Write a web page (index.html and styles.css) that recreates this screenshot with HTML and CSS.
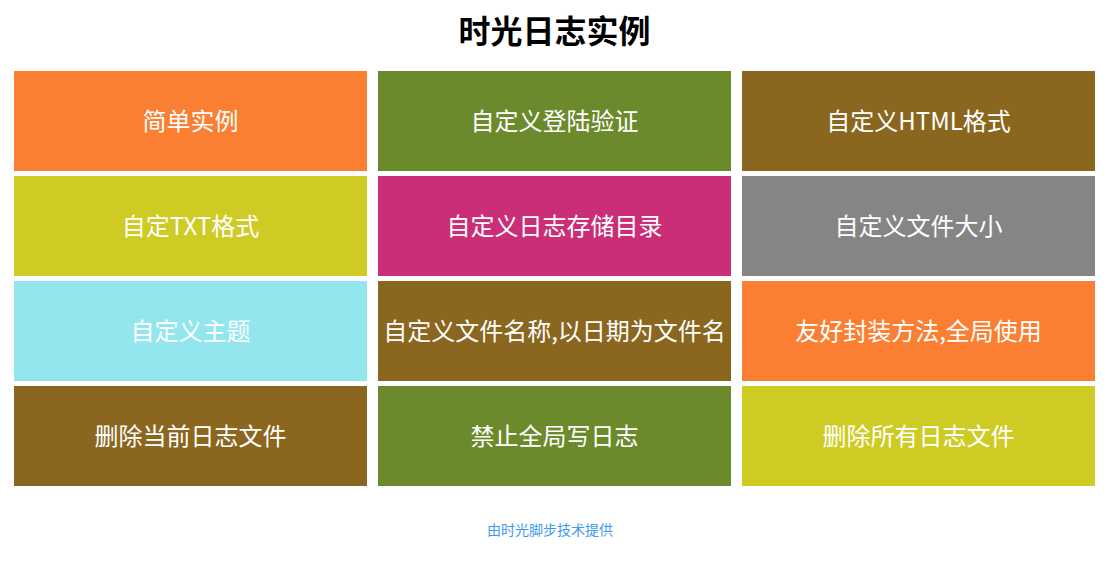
FILE: index.html
```html
<!DOCTYPE html>
<html lang="zh-CN">
<head>
<meta charset="utf-8">
<title>时光日志实例</title>
<link rel="stylesheet" href="styles.css">
</head>
<body>
<div class="page">
  <h1 class="title">时光日志实例</h1>
  <div class="grid">
    <a class="tile orange">简单实例</a>
    <a class="tile green">自定义登陆验证</a>
    <a class="tile brown">自定义HTML格式</a>
    <a class="tile lime">自定TXT格式</a>
    <a class="tile magenta">自定义日志存储目录</a>
    <a class="tile gray">自定义文件大小</a>
    <a class="tile cyan">自定义主题</a>
    <a class="tile brown">自定义文件名称,以日期为文件名</a>
    <a class="tile orange">友好封装方法,全局使用</a>
    <a class="tile brown">删除当前日志文件</a>
    <a class="tile green">禁止全局写日志</a>
    <a class="tile lime">删除所有日志文件</a>
  </div>
  <p class="footer">由时光脚步技术提供</p>
</div>
</body>
</html>
```

FILE: styles.css
```css
html, body {
  margin: 0;
  padding: 0;
  background: #ffffff;
  font-family: "Noto Sans CJK SC", "Noto Sans", sans-serif;
}

.page {
  width: 1109px;
}

.title {
  margin: 0;
  height: 62px;
  line-height: 58px;
  text-align: center;
  font-size: 32px;
  font-weight: bold;
  color: #000000;
}

.grid {
  margin-top: 9px;
  padding-left: 14px;
  display: grid;
  grid-template-columns: repeat(3, 353px);
  grid-auto-rows: 100px;
  column-gap: 11px;
  row-gap: 5px;
}

.tile {
  display: flex;
  align-items: center;
  justify-content: center;
  padding-bottom: 3px;
  color: #ffffff;
  font-size: 24px;
  text-decoration: none;
  white-space: nowrap;
}

.orange { background: #fb7f33; }
.green { background: #6b8a2b; }
.brown { background: #8a661f; }
.lime { background: #cecc24; }
.magenta { background: #c92e76; }
.gray { background: #858585; }
.cyan { background: #94e6ee; }

.footer {
  margin: 33px 0 0;
  padding-right: 9px;
  line-height: 20px;
  text-align: center;
  font-size: 14px;
  color: #3d9af0;
}
```
